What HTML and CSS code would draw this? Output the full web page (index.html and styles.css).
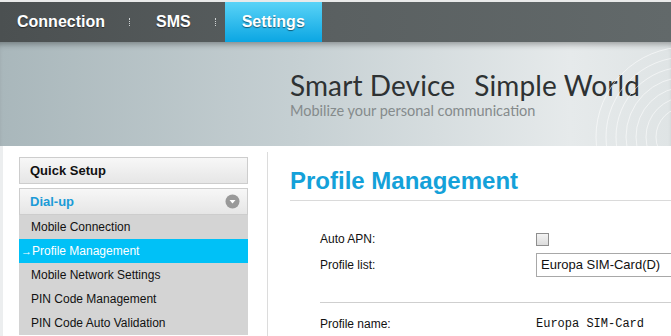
FILE: index.html
```html
<!DOCTYPE html>
<html lang="en">
<head>
    <meta charset="UTF-8">
    <title>Profile Management</title>
    <link rel="stylesheet" href="styles.css">
</head>
<body>

<div class="top-strip"></div>

<div class="nav">
    <a class="nav-item">Connection</a>
    <span class="nav-sep"></span>
    <a class="nav-item">SMS</a>
    <span class="nav-sep"></span>
    <a class="nav-item active">Settings</a>
</div>

<div class="banner">
    <div class="slogan">
        <div class="slogan-main">Smart Device <span class="gap"></span>Simple World</div>
        <div class="slogan-sub">Mobilize your personal communication</div>
    </div>
    <svg class="waves" width="80" height="110" viewBox="0 0 80 110">
        <g fill="none" stroke="#ffffff" stroke-opacity="0.7" stroke-width="0.8">
            <circle cx="95" cy="95" r="30"/>
            <circle cx="95" cy="95" r="40"/>
            <circle cx="95" cy="95" r="50"/>
            <circle cx="95" cy="95" r="60"/>
            <circle cx="95" cy="95" r="70"/>
            <circle cx="95" cy="95" r="80"/>
            <circle cx="95" cy="95" r="90"/>
        </g>
    </svg>
</div>

<div class="page">
    <div class="sidebar">
        <div class="menu-head">Quick Setup</div>
        <div class="menu-head open">
            Dial-up
            <span class="toggle">
                <svg width="15" height="15" viewBox="0 0 15 15">
                    <circle cx="7.5" cy="7.5" r="7" fill="#999"/>
                    <path d="M4.5 6 L10.5 6 L7.5 9.5 Z" fill="#fff"/>
                </svg>
            </span>
        </div>
        <ul class="submenu">
            <li>Mobile Connection</li>
            <li class="current"><span class="arrow">&#8594;</span>Profile Management</li>
            <li>Mobile Network Settings</li>
            <li>PIN Code Management</li>
            <li>PIN Code Auto Validation</li>
        </ul>
    </div>

    <div class="main">
        <h1>Profile Management</h1>
        <div class="form">
            <div class="row">
                <label>Auto APN:</label>
                <div class="value"><span class="checkbox"></span></div>
            </div>
            <div class="row">
                <label>Profile list:</label>
                <div class="value"><div class="select">Europa SIM-Card(D)</div></div>
            </div>
            <div class="divider"></div>
            <div class="row">
                <label>Profile name:</label>
                <div class="value mono">Europa SIM-Card</div>
            </div>
        </div>
    </div>
</div>

</body>
</html>
```

FILE: styles.css
```css
body {
    margin: 0;
    font-family: "Liberation Sans", Arial, sans-serif;
    background-color: #fff;
    overflow: hidden;
}

.top-strip {
    height: 2px;
    background-color: #e9eaea;
}

.nav {
    display: flex;
    align-items: center;
    height: 40px;
    background: linear-gradient(to right, #4b5051, #5a6061 50%, #62696a);
}

.nav-item {
    display: flex;
    align-items: center;
    height: 100%;
    padding: 0 17px;
    color: #fff;
    font-weight: bold;
    font-size: 16px;
    text-shadow: 0 1px 1px rgba(0, 0, 0, 0.5);
}

.nav-item.active {
    background: linear-gradient(to bottom, #5ad3f7, #0ba6e3);
    padding: 0 17px 0 17px;
}

.nav-sep {
    width: 1px;
    height: 8px;
    margin: 0 8px 0 7px;
    border-left: 1px dotted #d0d4d5;
}

.banner {
    position: relative;
    height: 104px;
    background: linear-gradient(to right, #a9b7bb, #c6d0d3 45%, #e6eaeb 85%, #dfe4e5);
    box-shadow: inset 0 6px 6px -4px rgba(0, 0, 0, 0.35);
    overflow: hidden;
}

.slogan {
    padding: 29px 0 0 290px;
}

.slogan-main {
    font-family: "Lato", "DejaVu Sans", sans-serif;
    font-size: 28px;
    color: #2e3233;
    letter-spacing: 0.1px;
    line-height: 28px;
    white-space: nowrap;
}

.slogan-main .gap {
    display: inline-block;
    width: 12px;
}

.slogan-sub {
    font-family: "Lato", "DejaVu Sans", sans-serif;
    font-size: 14.5px;
    line-height: 17px;
    color: #858b8c;
    margin-top: 3px;
}

.waves {
    position: absolute;
    right: 0;
    top: 0;
}

.page {
    display: flex;
    padding-top: 6px;
    border-left: 3px solid #eceeef;
}

.sidebar {
    width: 229px;
    margin: 5px 19px 0 16px;
}

.menu-head {
    display: flex;
    align-items: center;
    justify-content: space-between;
    height: 25px;
    padding: 0 10px;
    margin-bottom: 4px;
    border: 1px solid #cdcdcd;
    background: linear-gradient(to bottom, #f7f7f7, #e6e6e6);
    font-weight: bold;
    font-size: 13px;
    color: #111;
}

.menu-head.open {
    color: #1c9bd7;
    margin-bottom: 0;
}

.toggle {
    display: flex;
    margin-right: -3px;
}

.submenu {
    list-style: none;
    margin: 0;
    padding: 0;
    background-color: #d4d4d4;
}

.submenu li {
    height: 24px;
    line-height: 24px;
    padding-left: 12px;
    font-size: 12px;
    color: #111;
}

.submenu li.current {
    background-color: #00c1f7;
    color: #fff;
    padding-left: 2px;
}

.arrow {
    font-size: 11px;
}

.main {
    flex: 1;
    border-left: 1px solid #dcdcdc;
    padding-left: 22px;
}

h1 {
    margin: 13px 0 0 0;
    font-size: 24px;
    color: #14a1d9;
    line-height: 32px;
    padding-bottom: 3px;
    border-bottom: 1px solid #dadada;
}

.form {
    padding: 26px 0 0 30px;
}

.row {
    display: flex;
    align-items: center;
    height: 24px;
    font-size: 12px;
    color: #111;
}

.row + .row {
    margin-top: 2px;
}

.row label {
    width: 216px;
}

.value {
    flex: 1;
}

.checkbox {
    display: block;
    width: 11px;
    height: 11px;
    border: 1px solid #8e8e8e;
    background: linear-gradient(to bottom, #f3f3f3, #dcdcdc);
}

.select {
    height: 22px;
    line-height: 22px;
    border: 1px solid #a8a8a8;
    border-right: none;
    padding-left: 4px;
    font-size: 13px;
    color: #111;
}

.divider {
    height: 1px;
    background-color: #cfcfcf;
    margin: 25px 0 9px 0;
}

.mono {
    font-family: "Liberation Mono", "Courier New", monospace;
    font-size: 12px;
}
```
